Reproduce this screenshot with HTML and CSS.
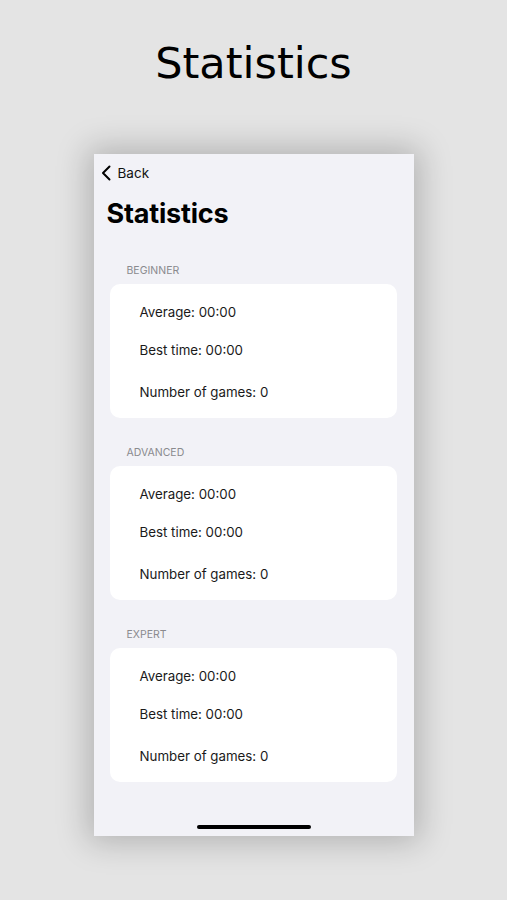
FILE: index.html
```html
<!DOCTYPE html>
<html>
<head>
<meta charset="utf-8">
<link rel="stylesheet" href="styles.css">
</head>
<body>
<div class="page">
  <h1 class="headline">Statistics</h1>
  <div class="phone">
    <div class="nav">
      <svg class="chev" width="10" height="16" viewBox="0 0 10 16"><path d="M8.5 1.5 L2 8 L8.5 14.5" fill="none" stroke="#000" stroke-width="2" stroke-linecap="round" stroke-linejoin="round"/></svg>
      <span class="back">Back</span>
    </div>
    <div class="big-title">Statistics</div>
    <div class="sections">
      <div class="section">
        <div class="sec-head">BEGINNER</div>
        <div class="card">
          <div class="row r1">Average: 00:00</div>
          <div class="row r2">Best time: 00:00</div>
          <div class="row r3">Number of games: 0</div>
        </div>
      </div>
      <div class="section">
        <div class="sec-head">ADVANCED</div>
        <div class="card">
          <div class="row r1">Average: 00:00</div>
          <div class="row r2">Best time: 00:00</div>
          <div class="row r3">Number of games: 0</div>
        </div>
      </div>
      <div class="section">
        <div class="sec-head">EXPERT</div>
        <div class="card">
          <div class="row r1">Average: 00:00</div>
          <div class="row r2">Best time: 00:00</div>
          <div class="row r3">Number of games: 0</div>
        </div>
      </div>
    </div>
    <div class="spacer"></div>
    <div class="home"></div>
  </div>
</div>
</body>
</html>
```
FILE: styles.css
```css
html, body {
  margin: 0;
  padding: 0;
  background: #e4e4e4;
}
.page {
  width: 507px;
  height: 900px;
  display: flex;
  flex-direction: column;
  align-items: center;
}
.headline {
  margin: 36px 0 0 0;
  height: 54px;
  font-family: "DejaVu Sans", sans-serif;
  font-weight: normal;
  font-size: 43px;
  line-height: 54px;
  color: #000;
}
.phone {
  margin-top: 64px;
  width: 320px;
  height: 682px;
  background: #f2f2f7;
  box-shadow: 0 0 30px 6px rgba(0,0,0,0.22);
  display: flex;
  flex-direction: column;
  font-family: "Inter", "Roboto", sans-serif;
  box-sizing: border-box;
}
.nav {
  display: flex;
  align-items: center;
  height: 20px;
  margin-top: 9px;
  padding-left: 7px;
}
.chev { display: block; }
.back {
  margin-left: 7px;
  font-size: 13.5px;
  color: #111;
}
.big-title {
  margin: 13px 0 0 13px;
  font-size: 27px;
  font-weight: 700;
  height: 36px;
  line-height: 36px;
  color: #000;
  letter-spacing: -0.2px;
}
.sections {
  margin-top: 32px;
  display: flex;
  flex-direction: column;
  gap: 28px;
}
.sec-head {
  margin-left: 33px;
  font-size: 10.5px;
  color: #8a8a8e;
  height: 14px;
  line-height: 14px;
}
.card {
  margin: 6px 17px 0 16px;
  background: #fff;
  border-radius: 10px;
  height: 134px;
  box-sizing: border-box;
  padding-left: 30px;
  display: flex;
  flex-direction: column;
}
.row {
  font-size: 13.3px;
  color: #1a1a1a;
  height: 20px;
  line-height: 20px;
}
.r1 { margin-top: 18px; }
.r2 { margin-top: 18px; }
.r3 { margin-top: 22px; }
.spacer { flex: 1; }
.home {
  align-self: center;
  width: 114px;
  height: 4px;
  border-radius: 2px;
  background: #000;
  margin-bottom: 7px;
}
```
